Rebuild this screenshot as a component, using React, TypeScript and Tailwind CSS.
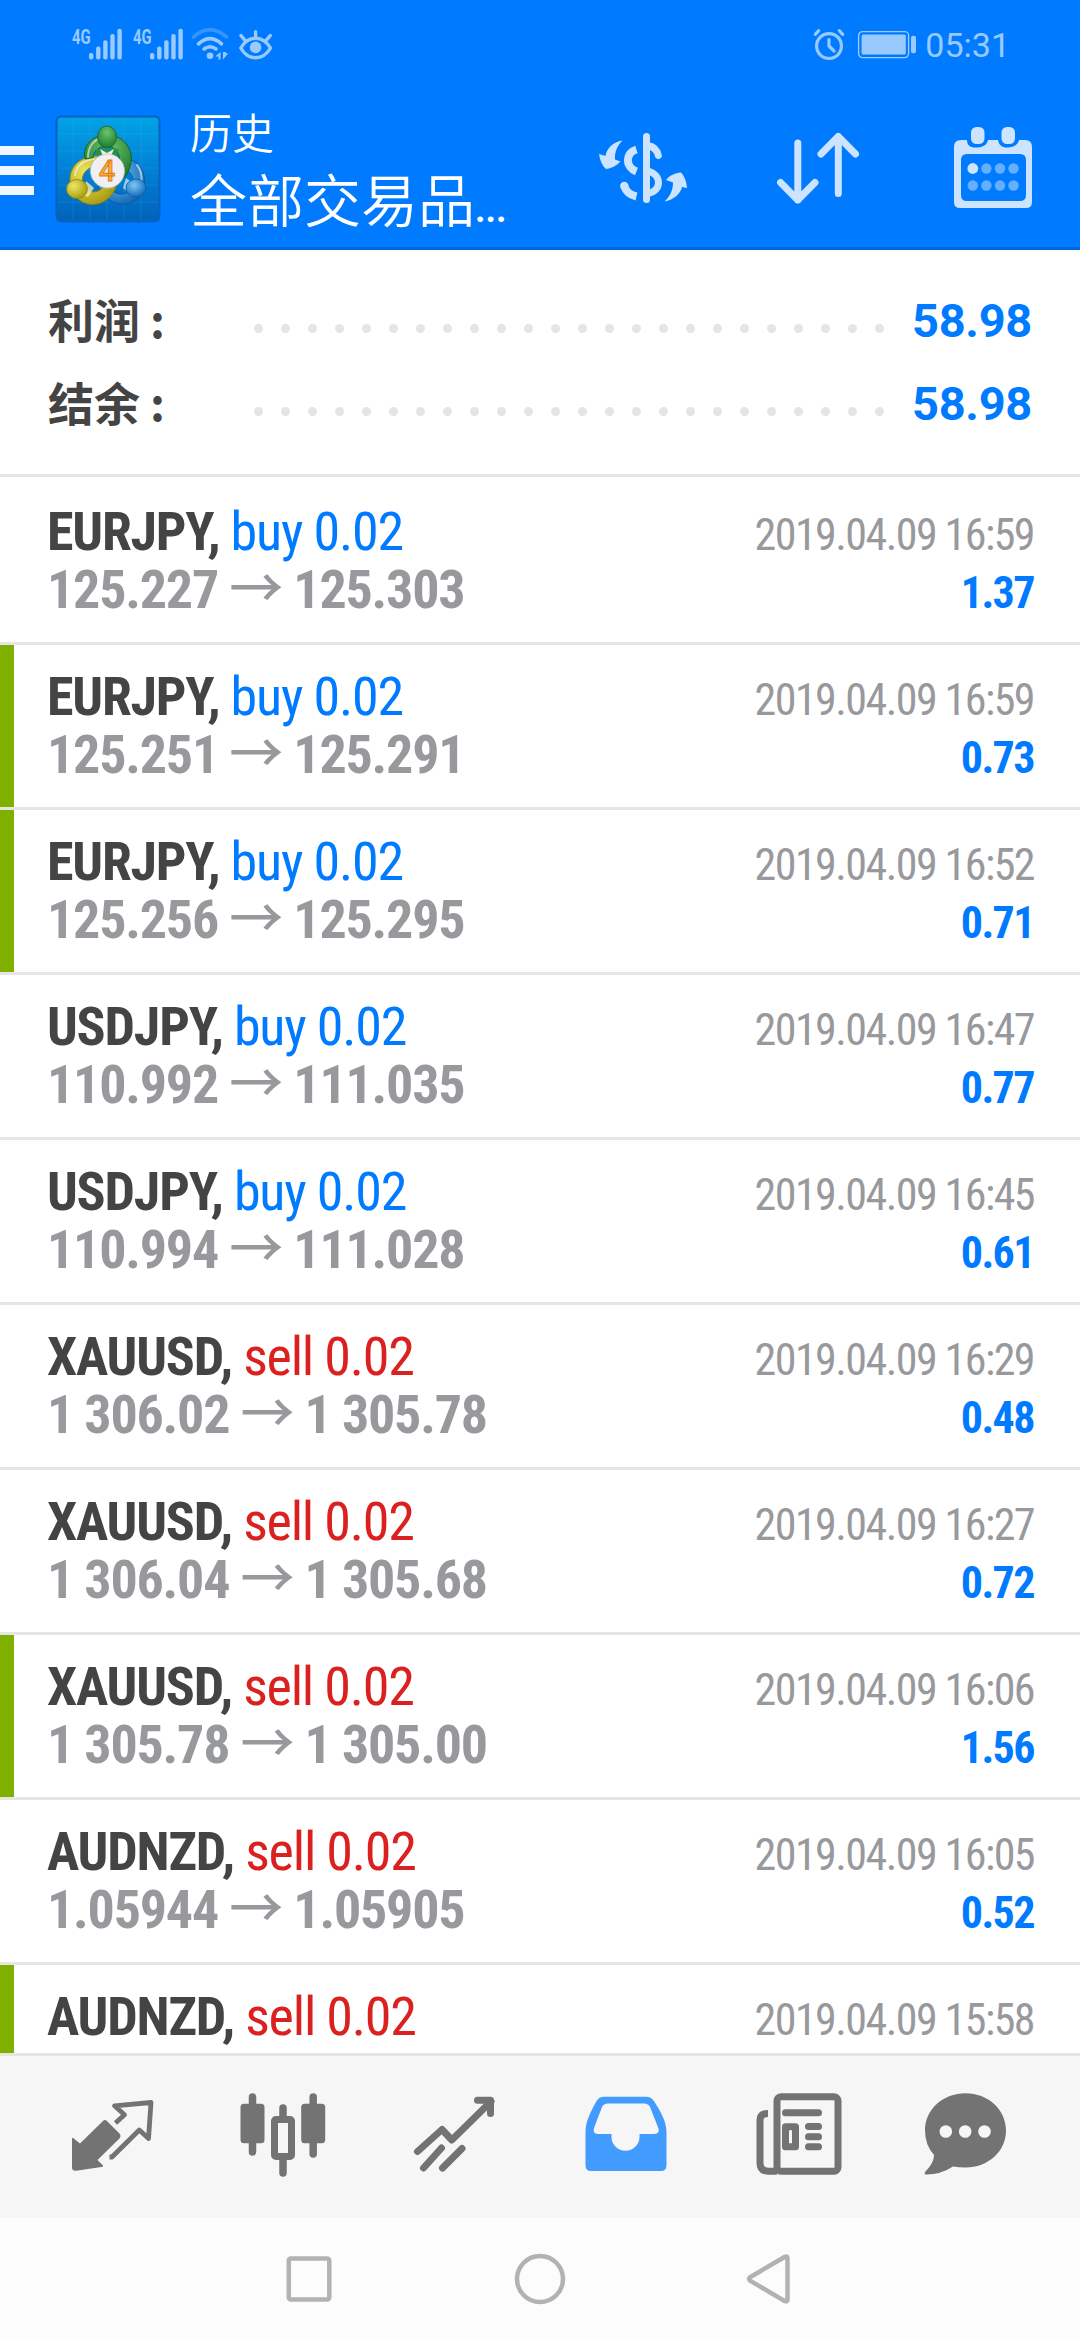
import type { ReactNode } from 'react';

interface Deal {
  symbol: string;
  side: 'buy' | 'sell';
  volume: string;
  time: string;
  open?: string;
  close?: string;
  profit?: string;
  marked?: boolean;
}

const deals: Deal[] = [
  { symbol: 'EURJPY', side: 'buy', volume: '0.02', open: '125.227', close: '125.303', time: '2019.04.09 16:59', profit: '1.37' },
  { symbol: 'EURJPY', side: 'buy', volume: '0.02', open: '125.251', close: '125.291', time: '2019.04.09 16:59', profit: '0.73', marked: true },
  { symbol: 'EURJPY', side: 'buy', volume: '0.02', open: '125.256', close: '125.295', time: '2019.04.09 16:52', profit: '0.71', marked: true },
  { symbol: 'USDJPY', side: 'buy', volume: '0.02', open: '110.992', close: '111.035', time: '2019.04.09 16:47', profit: '0.77' },
  { symbol: 'USDJPY', side: 'buy', volume: '0.02', open: '110.994', close: '111.028', time: '2019.04.09 16:45', profit: '0.61' },
  { symbol: 'XAUUSD', side: 'sell', volume: '0.02', open: '1 306.02', close: '1 305.78', time: '2019.04.09 16:29', profit: '0.48' },
  { symbol: 'XAUUSD', side: 'sell', volume: '0.02', open: '1 306.04', close: '1 305.68', time: '2019.04.09 16:27', profit: '0.72' },
  { symbol: 'XAUUSD', side: 'sell', volume: '0.02', open: '1 305.78', close: '1 305.00', time: '2019.04.09 16:06', profit: '1.56', marked: true },
  { symbol: 'AUDNZD', side: 'sell', volume: '0.02', open: '1.05944', close: '1.05905', time: '2019.04.09 16:05', profit: '0.52' },
  { symbol: 'AUDNZD', side: 'sell', volume: '0.02', time: '2019.04.09 15:58', marked: true },
];

const summary = [
  { label: '利润', value: '58.98' },
  { label: '结余', value: '58.98' },
];

function SignalIcon() {
  return (
    <div className="flex w-[61px] items-start">
      <span className="mt-px w-[17px] origin-left scale-x-[0.74] font-['Roboto'] text-[20px] leading-[16px] font-bold">4G</span>
      <svg width="34" height="32" viewBox="0 0 34 32" fill="currentColor">
        <rect x="0" y="25" width="4.4" height="6.4" rx="2" />
        <rect x="7.1" y="18.5" width="4.4" height="12.9" rx="2" />
        <rect x="14.2" y="12.3" width="4.4" height="19.1" rx="2" />
        <rect x="21.3" y="6" width="4.4" height="25.4" rx="2" />
        <rect x="28.4" y="0.8" width="4.4" height="30.6" rx="2" />
      </svg>
    </div>
  );
}

function StatusBar() {
  return (
    <div className="flex h-[84px] items-start justify-between pt-[28px] pr-[70px] pl-[72px] text-[#99caff]">
      <div className="flex items-start">
        <SignalIcon />
        <SignalIcon />
        <svg className="-ml-[4px]" width="40" height="34" viewBox="0 0 40 34" fill="none" stroke="currentColor" strokeWidth="3.6" strokeLinecap="round">
          <path d="M3.5 9Q20-5.5 36.5 9" opacity="0.35" />
          <path d="M8.5 15.8Q20 5.5 31.5 15.8" />
          <path d="M14 21Q20 16.5 26 21" />
          <circle cx="20" cy="27.7" r="3.3" fill="currentColor" stroke="none" />
          <path d="M25.3 28.6l5.2-4.6v7.5h-2v-2.9zM33 24v7.5l5.3-6.2h-2.5V24z" fill="currentColor" stroke="none" />
        </svg>
        <svg className="ml-[8px]" width="36" height="34" viewBox="0 0 36 34" fill="none" stroke="currentColor" strokeWidth="3.4" strokeLinecap="round">
          <path d="M2.8 20C10 7 25 7 32.5 20C25 33 10 33 2.8 20Z" strokeLinejoin="round" />
          <circle cx="17.6" cy="19.4" r="5.8" fill="currentColor" stroke="none" />
          <path d="M17.6 3.6v5M3 7.6l3.8 4.6M32.2 7.6l-3.8 4.6" />
        </svg>
      </div>
      <div className="flex items-start">
        <svg width="32" height="34" viewBox="0 0 32 34" fill="none" stroke="currentColor" strokeWidth="3.2" strokeLinecap="round">
          <circle cx="16" cy="18" r="12.4" />
          <path d="M16 11.5v6.5l5 5M2.3 6.3l3.4-3.6M29.7 6.3l-3.4-3.6" />
        </svg>
        <svg className="ml-[12px]" width="62" height="34" viewBox="0 0 62 34">
          <rect x="1.6" y="3.6" width="50" height="26" rx="4" fill="none" stroke="currentColor" strokeWidth="1.4" />
          <rect x="4.6" y="6.6" width="44.2" height="20" rx="1.5" fill="currentColor" />
          <rect x="54" y="7.7" width="5" height="17.6" rx="2" fill="currentColor" />
        </svg>
        <span className="ml-[6px] font-['Roboto'] text-[34px] leading-[35px]">05:31</span>
      </div>
    </div>
  );
}

function AppLogo() {
  return (
    <svg width="106" height="108" viewBox="0 0 106 108">
      <defs>
        <linearGradient id="tile" x1="0" y1="0" x2="0" y2="1">
          <stop offset="0" stopColor="#02a3e6" />
          <stop offset="0.5" stopColor="#0280d6" />
          <stop offset="1" stopColor="#0162b8" />
        </linearGradient>
        <radialGradient id="green" cx="0.5" cy="0.3" r="0.7">
          <stop offset="0" stopColor="#6cc46c" />
          <stop offset="1" stopColor="#1d7a2c" />
        </radialGradient>
        <radialGradient id="yellow" cx="0.35" cy="0.35" r="0.7">
          <stop offset="0" stopColor="#efe766" />
          <stop offset="1" stopColor="#a89b0c" />
        </radialGradient>
        <radialGradient id="blue" cx="0.4" cy="0.35" r="0.7">
          <stop offset="0" stopColor="#7cc8f4" />
          <stop offset="1" stopColor="#0e66b4" />
        </radialGradient>
      </defs>
      <rect x="1.5" y="1.5" width="103" height="105" rx="5" fill="url(#tile)" stroke="#0562c0" strokeWidth="2" />
      <path d="M18 3v102M35 3v102M52 3v102M69 3v102M86 3v102M3 19h100M3 36h100M3 53h100M3 70h100M3 87h100" stroke="#3db4f0" strokeWidth="0.7" opacity="0.3" />
      <path d="M73 44C89 48 94 66 85 80C77 93 57 92 47 78C42 71 40 62 42 56L49 60C50 72 59 80 68 79C80 77 82 61 71 54Z" fill="url(#blue)" stroke="#0a5aa6" strokeWidth="1" />
      <path d="M50 42C33 38 17 46 15 62C14 80 27 92 42 89C52 87 58 79 61 72L50 70C45 78 34 80 29 71C24 61 31 51 46 50Z" fill="url(#yellow)" stroke="#8f860c" strokeWidth="1" />
      <path d="M30 44C27 31 37 20 52 20C67 20 78 32 76 47C75 54 72 60 68 64L62 53C67 44 64 33 53 31C43 31 38 37 38 43Z" fill="url(#green)" stroke="#156223" strokeWidth="1" />
      <path d="M33 42C33 30 41 24 46 23M20 60C21 50 30 45 39 44M82 50C88 57 88 70 82 78" fill="none" stroke="#ffffff" strokeWidth="2" opacity="0.55" strokeLinecap="round" />
      <path d="M40 34h24l-4 10H44z" fill="#2d8f3c" />
      <path d="M45 34l7 4l7-4l-3 7h-8z" fill="#e9f6e7" />
      <path d="M31 66l8 7l-6 9l-5-2z" fill="#f3efb0" opacity="0.8" />
      <path d="M71 63l7 5l-2 12l-8-7z" fill="#d9ecf5" opacity="0.7" />
      <ellipse cx="52" cy="22" rx="9.5" ry="11" fill="url(#green)" stroke="#156223" strokeWidth="0.8" />
      <ellipse cx="22" cy="74" rx="10.5" ry="9.5" fill="url(#yellow)" stroke="#8f860c" strokeWidth="0.8" />
      <ellipse cx="81" cy="73" rx="10" ry="9" fill="url(#blue)" stroke="#0a5aa6" strokeWidth="0.8" />
      <circle cx="52.5" cy="56" r="17" fill="#f0f0f2" stroke="#b9c4c4" strokeWidth="0.8" />
      <text x="52" y="66" textAnchor="middle" fontFamily="Roboto" fontWeight="500" fontSize="29" fill="#fbb03b" stroke="#e07a1a" strokeWidth="0.9">4</text>
    </svg>
  );
}

function AppHeader() {
  return (
    <div className="flex h-[166px] items-start border-b-[3px] border-[#0067dc]">
      <div className="mt-[62px] flex w-[34px] flex-col gap-[11px]">
        <div className="h-[9px] bg-[#f0f7ff]" />
        <div className="h-[9px] bg-[#f0f7ff]" />
        <div className="h-[9px] bg-[#f0f7ff]" />
      </div>
      <div className="mt-[31px] ml-[21px]">
        <AppLogo />
      </div>
      <div className="ml-[29px] w-[330px] text-white">
        <div className="mt-[26px] font-['Roboto','Noto_Sans_CJK_SC',sans-serif] text-[42px] leading-[50px] font-[350]">历史</div>
        <div className="mt-[10px] font-['Roboto','Noto_Sans_CJK_SC',sans-serif] text-[57px] leading-[66px] font-[350] whitespace-nowrap">
          全部交易品<span className="font-['Roboto'] text-[36px] font-bold">...</span>
        </div>
      </div>
      <div className="mt-[41px] ml-[75px] flex text-[#cce4ff]">
        <svg width="96" height="86" viewBox="0 0 96 86" fill="none" stroke="currentColor" strokeWidth="7" strokeLinecap="round">
          <path d="M51.5 11.5v63" />
          <path d="M41.5 24.5C30 28 30 42 41.5 46.5M29.3 61C31 67 35 70 41.5 71.5" strokeWidth="8" strokeLinecap="butt" />
          <circle cx="29.3" cy="61" r="4.2" fill="currentColor" stroke="none" />
          <path d="M53 20.5C58 21.5 62 24.5 63.3 30.5M53 46C67 50 67 66 53 68.5" />
          <path d="M27.5 15.5C18 17 11.5 23.5 10.5 31L4 29C5 36 7.5 41 11 44C16 43.5 21.5 41 25.5 36.5L20 34.5C19.5 27 22 21 27.5 15.5Z" fill="currentColor" stroke="none" />
          <path d="M69.5 76.5C79 75 86 68 87 62L92 63C91.5 56 89 50.5 86 47.5C80 48 74.5 50.5 71 55L78 57.5C78 65 75 71.5 69.5 76.5Z" fill="currentColor" stroke="none" />
        </svg>
        <svg className="ml-[80px]" width="90" height="86" viewBox="0 0 90 86" fill="none" stroke="currentColor" strokeWidth="7" strokeLinecap="round" strokeLinejoin="round">
          <path d="M26.8 18v57M9.5 57.5L26.8 75L44 57.5" />
          <path d="M67.3 68.5v-57M50 29L67.3 11.5L84.5 29" />
        </svg>
        <svg className="ml-[92px]" width="82" height="86" viewBox="0 0 82 86" fill="currentColor">
          <path fillRule="evenodd" d="M8 15h6C14 21 18 22.5 23 22.5S34 21 35 15h10C46 21 50 22.5 54 22.5S65 21 66 15h6q7 0 7 7v55q0 6-6 6H7q-6 0-6-6V22q0-7 7-7zM14 29q-6 0-6 6v35q0 6 6 6h53q6 0 6-6V35q0-6-6-6z" />
          <rect x="18" y="2" width="13.5" height="17" rx="5.5" />
          <rect x="48.5" y="2" width="13.5" height="17" rx="5.5" />
          <circle cx="19.8" cy="43.5" r="5.4" />
          <g opacity="0.5">
            <circle cx="33.4" cy="43.5" r="5.2" />
            <circle cx="47" cy="43.5" r="5.2" />
            <circle cx="60.5" cy="43.5" r="5.2" />
            <circle cx="19.8" cy="60.5" r="5.2" />
            <circle cx="33.4" cy="60.5" r="5.2" />
            <circle cx="47" cy="60.5" r="5.2" />
            <circle cx="60.5" cy="60.5" r="5.2" />
          </g>
        </svg>
      </div>
    </div>
  );
}

function SummaryRow({ label, value }: { label: string; value: string }) {
  return (
    <div className="flex h-[83px] items-center">
      <span className="-mt-[3px] w-[206px] font-['Noto_Sans_CJK_SC',sans-serif] text-[46px] leading-[60px] font-bold text-[#444444]">
        {label}
        <span className="ml-[10px]">:</span>
      </span>
      <div className="mt-[18px] flex gap-[18px]">
        {Array.from({ length: 24 }, (_, i) => (
          <div key={i} className="size-[9px] rounded-full bg-[#e5e5e5]" />
        ))}
      </div>
      <span className="mt-[2px] ml-auto font-['Roboto'] text-[47px] leading-[56px] font-bold tracking-[-0.3px] text-[#007aff]">{value}</span>
    </div>
  );
}

function DealRow({ deal }: { deal: Deal }) {
  const sideColor = deal.side === 'buy' ? 'text-[#007aff]' : 'text-[#db2020]';
  return (
    <div className="flex h-[165px] shrink-0 border-b-[3px] border-[#e5e5e5] font-['Roboto_Condensed']">
      <div className={`w-[14px] ${deal.marked ? 'bg-[#7fb000]' : ''}`} />
      <div className="flex flex-1 justify-between pt-[23px] pr-[46px] pl-[33px]">
        <div className="text-[54px] leading-[58px] tracking-[-1.2px] whitespace-nowrap">
          <div>
            <span className="font-bold text-[#444444]">{deal.symbol},</span>{' '}
            <span className={sideColor}>{deal.side} {deal.volume}</span>
          </div>
          {deal.open && (
            <div className="font-bold text-[#98999d]">
              {deal.open} <span className="font-['Noto_Sans_CJK_SC'] leading-[0] font-medium">→</span> {deal.close}
            </div>
          )}
        </div>
        <div className="pt-[3px] text-right text-[44px] leading-[58px] tracking-[-1.55px] whitespace-nowrap">
          <div className="text-[#98999d]">{deal.time}</div>
          {deal.profit && <div className="font-bold text-[#007aff]">{deal.profit}</div>}
        </div>
      </div>
    </div>
  );
}

function TabIcon({ children, active }: { children: ReactNode; active?: boolean }) {
  return (
    <div className={`flex w-[171px] justify-center ${active ? 'text-[#429bff]' : 'text-[#737373]'}`}>
      <svg width="91" height="90" viewBox="0 0 91 90" fill="none" stroke="currentColor" strokeLinecap="round" strokeLinejoin="round">
        {children}
      </svg>
    </div>
  );
}

function TabBar() {
  return (
    <div className="flex h-[165px] items-center border-t-[3px] border-[#e5e5e5] bg-[#f6f6f6] px-[27px]">
      <TabIcon>
        <path d="M5 47Q5 45.2 6.5 46.2L13 51.5L36 29Q38 27.2 40 29L52.5 41.5Q54.5 44 52.5 46.5L30.5 68L36 73.5V74.7L9 78.8Q5 79 5 75.500Z" fill="currentColor" stroke="none" />
        <path d="M48.500 31L57.500 22.800L47.500 13.800L84 10.500L81.500 46.500L72.300 38L45 65H42.500" strokeWidth="4.8" strokeLinecap="butt" />
      </TabIcon>
      <TabIcon>
        <path d="M14.5 5v55M75.2 5v57M45 16v10M45 68v13" strokeWidth="7.5" />
        <rect x="2.5" y="11.7" width="24" height="39.5" rx="3.5" fill="currentColor" stroke="none" />
        <rect x="63.2" y="11.7" width="24" height="39.5" rx="3.5" fill="currentColor" stroke="none" />
        <rect x="36.5" y="27.5" width="17" height="37" rx="1.5" fill="#f6f6f6" strokeWidth="7" />
      </TabIcon>
      <TabIcon>
        <path d="M8.5 59.5L33 37.5L42.8 48L82 9.5M68.5 8.3H81.5V21.5" strokeWidth="7" />
        <path d="M14.5 76L32.5 56M33.5 76L53 56.5" strokeWidth="7" />
      </TabIcon>
      <TabIcon active>
        <path fillRule="evenodd" stroke="none" fill="currentColor" d="M24 4.7H66Q71 4.7 73.5 8.5C80 18.5 86.5 29 86.5 40V73Q86.5 79 81 79H11Q5.5 79 5.5 73V40C5.5 29 11.5 18.5 16.5 9Q19 4.7 24 4.7ZM28 11.5Q23.5 11.5 22 15L14 36Q12.5 42 18.5 42H31.5V45C31.5 53 38 58.7 45.5 58.7S59.5 53 59.5 45V42H73Q80 42 78.5 36.5L70 15Q68.5 11.5 64 11.5Z" />
      </TabIcon>
      <TabIcon>
        <rect x="26" y="4.7" width="61" height="74.5" rx="4" strokeWidth="7" />
        <path d="M17 21.5Q9 21.5 9 28V70.5Q9 79.2 17 79.2H26" strokeWidth="7" strokeLinecap="butt" />
        <path d="M34.5 20.7H67.5M57.5 34.5H67.5M57.5 44.7H67.5M57.5 54.8H67.5" strokeWidth="7" />
        <rect x="34.5" y="34.7" width="10" height="20" strokeWidth="7" />
      </TabIcon>
      <TabIcon>
        <path d="M43.5 1.3C66 1.3 84 17.5 84 38.5S66 75.5 43.5 75.5Q37 75.5 31 74.5Q19 82.5 4 82.5Q1.5 82 3.5 79.5Q12 71 12 63Q3 53 3 38.5C3 17.5 21 1.3 43.5 1.3Z" fill="currentColor" stroke="none" />
        <g fill="#f6f6f6" stroke="none">
          <circle cx="23.8" cy="39.5" r="6.3" />
          <circle cx="43.2" cy="39.5" r="6.3" />
          <circle cx="62.5" cy="39.5" r="6.3" />
        </g>
      </TabIcon>
    </div>
  );
}

function NavKey({ children }: { children: ReactNode }) {
  return (
    <div className="flex w-[231px] justify-center">
      <svg width="60" height="60" viewBox="0 0 60 60" fill="none" stroke="#b2b2b2" strokeWidth="4.5" strokeLinejoin="round">
        {children}
      </svg>
    </div>
  );
}

function SystemNav() {
  return (
    <div className="flex h-[122px] items-center justify-center bg-[#fcfcfc]">
      <NavKey>
        <rect x="9.8" y="9.6" width="40.5" height="41" rx="2" />
      </NavKey>
      <NavKey>
        <circle cx="30" cy="30" r="23" />
      </NavKey>
      <NavKey>
        <path d="M9 28.2Q7 30 9 31.6L44 52.2Q46.5 53 46.5 50.5V9.5Q46.5 6.8 44 7.8Z" />
      </NavKey>
    </div>
  );
}

export default function App() {
  return (
    <div className="flex h-[2340px] w-[1080px] flex-col overflow-hidden bg-white">
      <div className="bg-[#007aff]">
        <StatusBar />
        <AppHeader />
      </div>
      <div className="h-[227px] border-b-[3px] border-[#e5e5e5] pt-[28px] pr-[48px] pl-[48px]">
        {summary.map((item) => (
          <SummaryRow key={item.label} label={item.label} value={item.value} />
        ))}
      </div>
      <div className="flex h-[1576px] flex-col overflow-hidden pt-[3px]">
        {deals.map((deal, i) => (
          <DealRow key={i} deal={deal} />
        ))}
      </div>
      <TabBar />
      <SystemNav />
    </div>
  );
}
